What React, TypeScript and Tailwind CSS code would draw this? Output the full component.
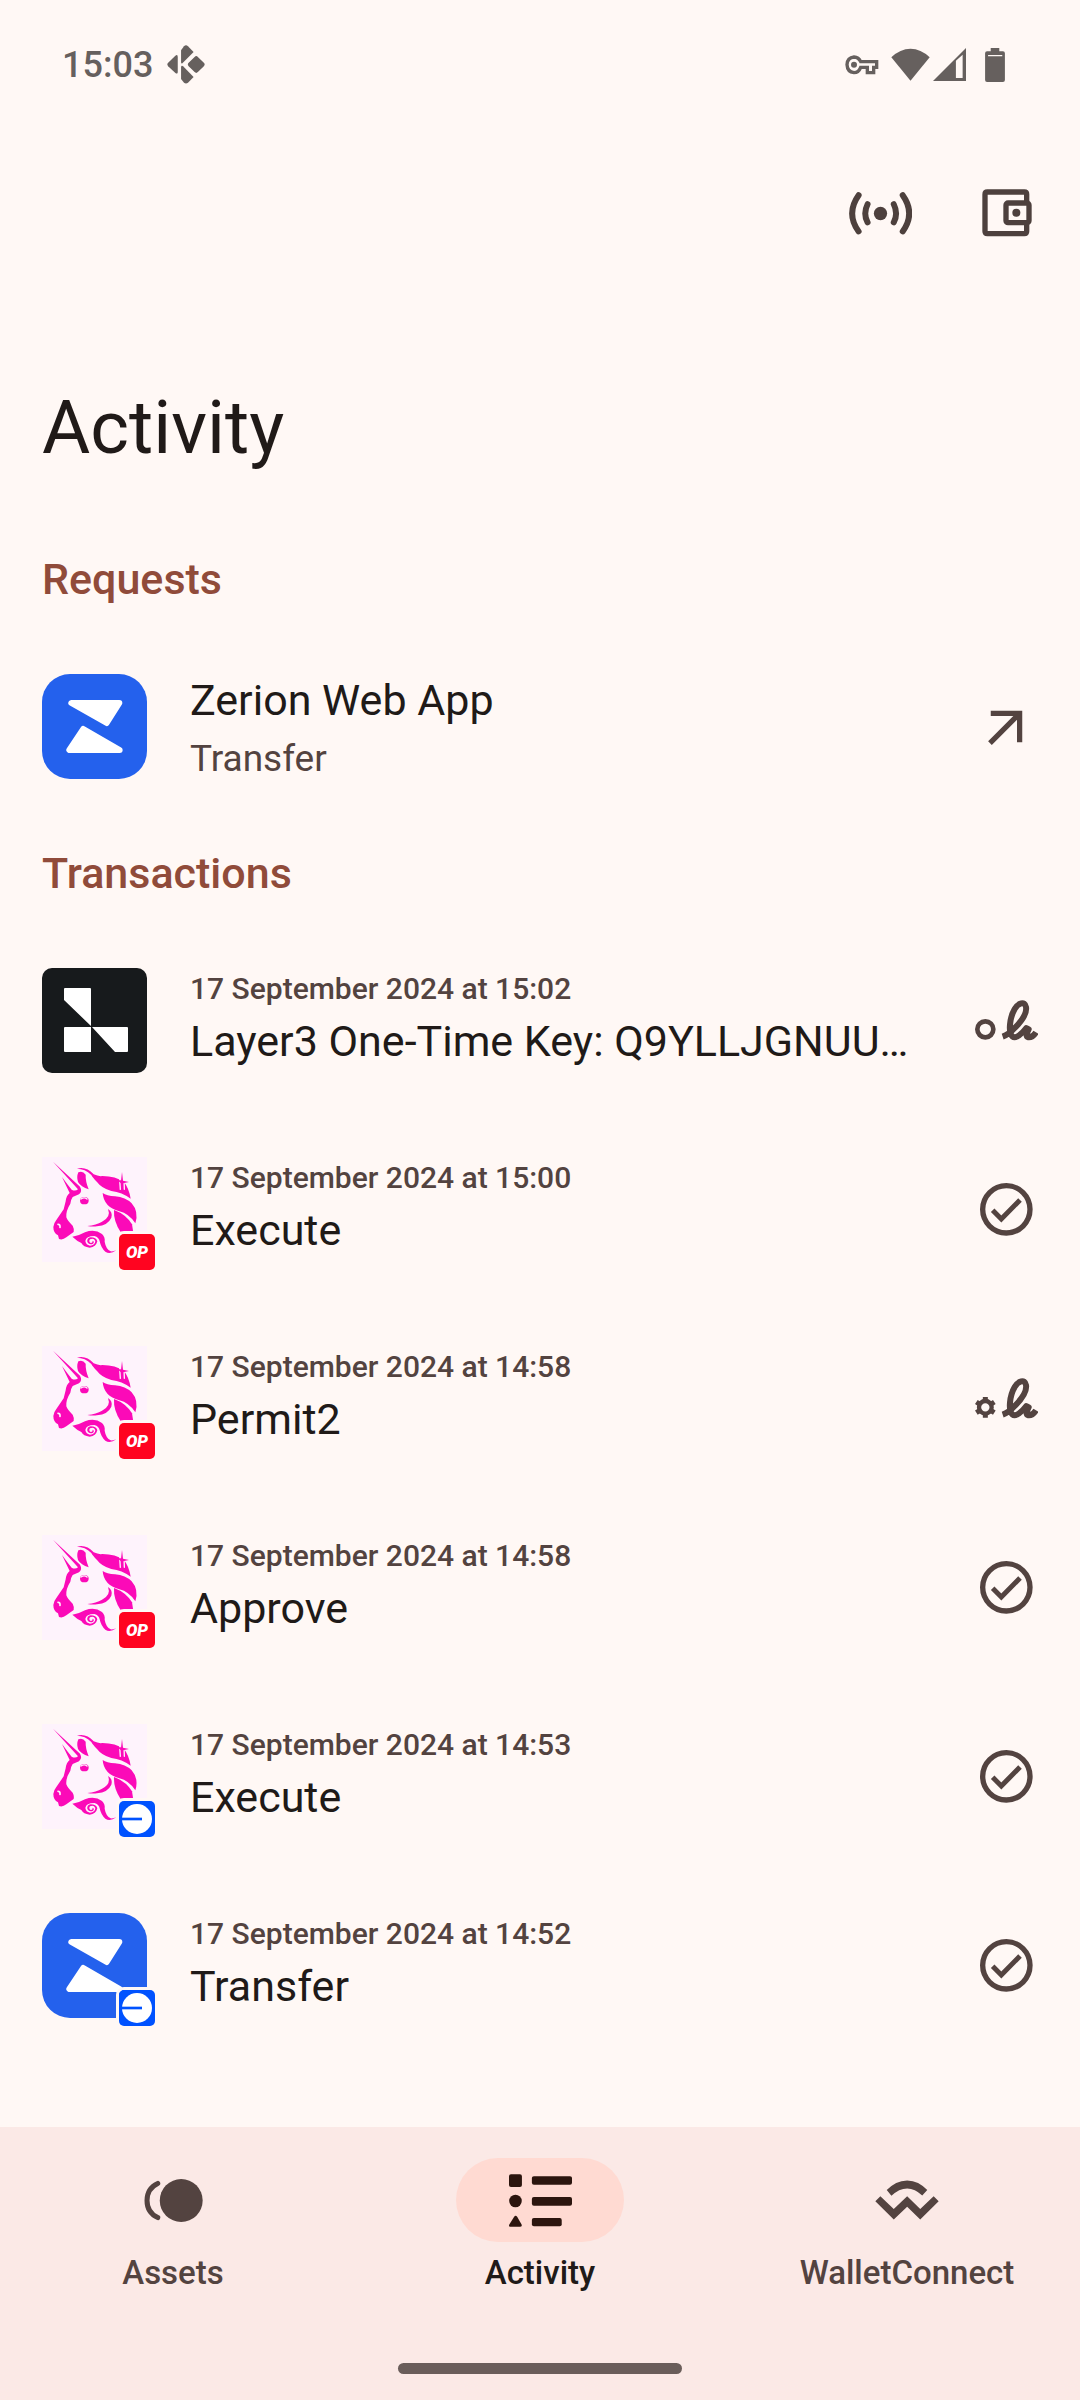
import React from "react";

type IconProps = { className?: string };

function KodiIcon() {
  return (
    <svg viewBox="378 46 114 118" className="h-[39px] w-[38px]" fill="currentColor" aria-hidden="true">
      <path d="M429 50Q435 44 441 50L458 67L424 101Q420 104 420 97V62Z" />
      <path d="M461 82Q466 77 471 82L489 100Q494 105 489 110L471 128Q466 133 461 128L443 110Q438 105 443 100Z" />
      <path d="M402 79Q410 73 410 82V128Q410 136 402 130L381 110Q376 105 381 100Z" />
      <path d="M420 113Q421 106 427 111L458 143L441 160Q435 165 429 160L420 149Z" />
    </svg>
  );
}

function KeyIcon() {
  return (
    <svg viewBox="74 74 102 60" className="h-[20px] w-[34px]" fill="none" stroke="currentColor" strokeWidth="10" aria-hidden="true">
      <path d="M121 94H169V111H160V127H141V111H121Q115 127 101 127Q81 125 80 103Q81 82 101 80Q115 81 121 94Z" />
      <circle cx="101" cy="103" r="9" fill="currentColor" stroke="none" />
    </svg>
  );
}

function WifiIcon() {
  return (
    <svg viewBox="212 50 118 98" className="h-[33px] w-[39px]" fill="currentColor" aria-hidden="true">
      <path d="M271 148L213 77Q240 51 271 51Q302 51 329 77Z" />
    </svg>
  );
}

function SignalIcon() {
  return (
    <svg viewBox="340 52 98 98" className="h-[33px] w-[33px]" fill="currentColor" aria-hidden="true">
      <path fillRule="evenodd" d="M438 52V150H340ZM408 90V141H428V72Z" />
    </svg>
  );
}

function BatteryIcon() {
  return (
    <svg viewBox="495 50 60 103" className="h-[34px] w-[20px]" fill="currentColor" aria-hidden="true">
      <path fillRule="evenodd" d="M512 50H538V60H549Q555 60 555 66V147Q555 153 549 153H501Q495 153 495 147V66Q495 60 501 60H512ZM504 71V75H547V71Z" />
    </svg>
  );
}

function BroadcastIcon() {
  return (
    <svg viewBox="86 484 190 128" className="h-[43px] w-[63px]" fill="none" stroke="currentColor" strokeWidth="18" strokeLinecap="round" aria-hidden="true">
      <circle cx="181" cy="548" r="20" fill="currentColor" stroke="none" />
      <path d="M115 493Q76 548 115 602M248 493Q287 548 248 602M142 520Q128 548 142 575M221 520Q235 548 221 575" />
    </svg>
  );
}

function WalletIcon() {
  return (
    <svg viewBox="488 476 150 144" className="h-[48px] w-[50px]" fill="none" stroke="currentColor" strokeWidth="16" aria-hidden="true">
      <path d="M622 512V492Q622 485 615 485H504Q497 485 497 492V603Q497 610 504 610H615Q622 610 622 603V582" />
      <rect x="560" y="518" width="69" height="59" rx="6" />
      <circle cx="591" cy="547" r="12" fill="currentColor" stroke="none" />
    </svg>
  );
}

function ArrowIcon() {
  return (
    <svg viewBox="0 0 24 24" className="h-[63px] w-[63px]" fill="currentColor" aria-hidden="true">
      <path d="M6 6v2h8.590L5 17.590 6.410 19 16 9.410V18h2V6z" />
    </svg>
  );
}

function CheckIcon() {
  return (
    <svg viewBox="105 624 189 189" className="h-[63px] w-[63px]" fill="none" stroke="currentColor" strokeWidth="16" aria-label="Confirmed" role="img">
      <circle cx="199" cy="718" r="71" />
      <path d="M158 721L184 747L240 690" strokeWidth="15" />
    </svg>
  );
}

function Signature() {
  return (
    <path
      d="M188 197Q206 191 226 169C250 145 261 125 258 108C254 89 235 96 224 114C209 140 204 184 217 196C228 205 246 188 259 171L266 175C259 188 257 197 265 199C274 200 283 192 288 184"
      fill="none"
      stroke="currentColor"
      strokeWidth="18"
      strokeLinejoin="round"
    />
  );
}

function SignMessageIcon() {
  return (
    <svg viewBox="105 54 189 189" className="h-[63px] w-[63px]" fill="none" stroke="currentColor" aria-label="Signed message" role="img">
      <circle cx="136" cy="175" r="24" strokeWidth="14" />
      <Signature />
    </svg>
  );
}

function SignTypedIcon() {
  return (
    <svg viewBox="105 54 189 189" className="h-[63px] w-[63px]" fill="none" stroke="currentColor" aria-label="Signed data" role="img">
      <circle cx="136" cy="175" r="19" strokeWidth="13" />
      <path d="M136 144V156M136 194V206M109 159L120 166M152 184L163 191M163 159L152 166M120 184L109 191" strokeWidth="15" />
      <Signature />
    </svg>
  );
}

function ZerionLogo() {
  return (
    <svg viewBox="66 912 315 315" className="block h-[105px] w-[105px]" aria-label="Zerion" role="img">
      <rect x="66" y="912" width="315" height="315" rx="84" fill="#2461ed" />
      <g fill="#fff" stroke="#fff" strokeWidth="18" strokeLinejoin="round">
        <path d="M154 999H298L260 1059Z" />
        <path d="M190 1077L148 1140H299Z" />
      </g>
    </svg>
  );
}

function LayerLogo() {
  return (
    <svg viewBox="0 0 105 105" className="block h-[105px] w-[105px]" aria-label="Layer3" role="img">
      <rect width="105" height="105" rx="10" fill="#171a1c" />
      <path fill="#fff" d="M23 20H48Q49 20 49 21V58L22 32V21Q22 20 23 20ZM23 59H49V84H23Q22 84 22 83V60Q22 59 23 59ZM50 59H85Q86 59 86 60V83Q86 84 85 84H73Z" />
    </svg>
  );
}

function UnicornLogo() {
  return (
    <svg viewBox="36 51 315 315" className="block h-[105px] w-[105px]" aria-label="Uniswap" role="img">
      <rect x="36" y="51" width="315" height="315" fill="#fef3fc" />
      <g fill="#fb0ab8">
        <path d="M69 65L150 140Q158 154 147 163L128 171Q122 180 121 191Q107 213 109 232Q112 242 128 257Q133 266 131 276L109 292Q98 301 87 297L84 286Q70 279 70 261Q72 248 79 240L101 208L107 184Q109 166 119 159L96 111Q111 132 125 149Q136 155 144 148Z" />
        <path d="M145 97Q158 91 167 104Q166 123 176 148Q153 141 144 126Q139 111 145 97Z" />
        <path d="M141 86Q168 78 191 103Q206 110 217 108Q257 108 282 126Q297 145 302 176Q276 157 244 153Q215 145 201 126Q188 113 184 105Q165 86 141 86Z" />
        <path d="M218 159Q230 168 255 169Q287 172 305 190Q327 215 316 250Q297 221 268 214Q221 201 218 159Z" />
        <path d="M252 210Q288 223 306 253L310 278H273Q250 245 252 210Z" />
        <path d="M234 207Q249 216 244 233Q234 256 201 259Q188 261 172 258Q199 255 216 245Q244 231 234 207Z" />
        <ellipse cx="163" cy="182" rx="13" ry="11" />
        <path d="M127 290Q148 287 165 277Q194 266 216 282Q226 292 224 305Q228 328 242 334Q250 335 259 331Q240 344 226 335Q213 324 209 304Q207 292 193 288Q168 288 166 303Q168 315 180 317Q195 316 196 303Q191 292 180 298Q175 305 182 309Q190 307 187 302Q195 304 189 311Q178 316 172 306Q170 294 182 292Q199 292 202 304Q198 321 179 323Q160 321 154 309Q142 304 127 290Z" />
      </g>
      <g fill="none" stroke="#fef3fc" strokeLinecap="round">
        <path d="M153 177Q163 170 171 177" strokeWidth="4" />
        <path d="M84 253Q91 253 90 262" strokeWidth="5" />
        <path d="M269 119L271 148M282 117L283 148" strokeWidth="4" />
      </g>
      <path d="M276 96L279 122L297 126L279 130L277 158L273 130L258 117L273 122Z" fill="#fb0ab8" />
    </svg>
  );
}

function NetworkBadge({ network }: { network: "op" | "base" }) {
  return (
    <span className="absolute -right-[11px] -bottom-[11px] rounded-[8px] border-3 border-[#fff8f5]">
      {network === "op" ? (
        <span className="flex size-[36px] items-center justify-center rounded-[5px] bg-[#ff0420] text-[17px] leading-none font-black text-white italic">OP</span>
      ) : (
        <svg viewBox="0 0 108 108" className="block size-[36px]" aria-label="Base" role="img">
          <rect width="108" height="108" rx="15" fill="#0052ff" />
          <circle cx="54" cy="54" r="45" fill="#fff" />
          <path d="M8 50H69V58H8Z" fill="#0052ff" />
        </svg>
      )}
    </span>
  );
}

function AssetsIcon({ className }: IconProps) {
  return (
    <svg viewBox="130 177 176 128" className={className} aria-hidden="true">
      <circle cx="241" cy="241" r="64" fill="currentColor" />
      <path d="M171 190Q139 205 139 241Q139 277 171 292" fill="none" stroke="currentColor" strokeWidth="15" strokeLinecap="round" />
    </svg>
  );
}

function ActivityIcon({ className }: IconProps) {
  return (
    <svg viewBox="264 162 190 159" className={className} fill="currentColor" aria-hidden="true">
      <rect x="264" y="162" width="39" height="39" rx="6" />
      <circle cx="283.500" cy="243" r="19" />
      <path d="M279 291Q284 284 289 291L302 314Q304 321 297 321H270Q262 321 265 314Z" />
      <rect x="333" y="168" width="121" height="26" rx="6" />
      <rect x="333" y="231" width="121" height="26" rx="6" />
      <rect x="333" y="294" width="90" height="25" rx="6" />
    </svg>
  );
}

function WalletConnectIcon({ className }: IconProps) {
  return (
    <svg viewBox="344 184 191 119" className={className} fill="currentColor" aria-hidden="true">
      <path d="M379 214Q405 186 440 185Q475 186 500 214L485 230Q463 209 440 209Q416 209 393 231Z" />
      <path d="M345 247L360 232L400 270L440 232L479 270L519 232L534 247L479 302L440 264L400 302Z" />
    </svg>
  );
}

type Transaction = {
  date: string;
  title: string;
  logo: React.ReactNode;
  network?: "op" | "base";
  status: React.ReactNode;
};

const transactions: Transaction[] = [
  { date: "17 September 2024 at 15:02", title: "Layer3 One-Time Key: Q9YLLJGNUU…", logo: <LayerLogo />, status: <SignMessageIcon /> },
  { date: "17 September 2024 at 15:00", title: "Execute", logo: <UnicornLogo />, network: "op", status: <CheckIcon /> },
  { date: "17 September 2024 at 14:58", title: "Permit2", logo: <UnicornLogo />, network: "op", status: <SignTypedIcon /> },
  { date: "17 September 2024 at 14:58", title: "Approve", logo: <UnicornLogo />, network: "op", status: <CheckIcon /> },
  { date: "17 September 2024 at 14:53", title: "Execute", logo: <UnicornLogo />, network: "base", status: <CheckIcon /> },
  { date: "17 September 2024 at 14:52", title: "Transfer", logo: <ZerionLogo />, network: "base", status: <CheckIcon /> },
];

const tabs = [
  { label: "Assets", icon: <AssetsIcon className="h-[43px] w-[59px]" />, active: false },
  { label: "Activity", icon: <ActivityIcon className="h-[53px] w-[63px]" />, active: true },
  { label: "WalletConnect", icon: <WalletConnectIcon className="h-[40px] w-[64px]" />, active: false },
];

function SectionTitle({ children }: { children: React.ReactNode }) {
  return <h2 className="py-[21px] text-[43px] leading-[63px] font-medium text-[#904b3a]">{children}</h2>;
}

export default function App() {
  return (
    <div className="flex min-h-screen flex-col bg-[#fff8f5] font-[Roboto,sans-serif] text-[#201a18]">
      <div className="flex h-[129px] items-center justify-between pr-[75px] pl-[62px] text-[#66605e]">
        <div className="flex items-center gap-[14px]">
          <span className="text-[36px] leading-[42px] font-medium">15:03</span>
          <KodiIcon />
        </div>
        <div className="flex items-center">
          <KeyIcon />
          <div className="ml-3 flex gap-[3px]">
            <WifiIcon />
            <SignalIcon />
          </div>
          <div className="ml-[19px]">
            <BatteryIcon />
          </div>
        </div>
      </div>

      <header className="px-[42px]">
        <div className="flex h-[168px] items-center justify-end gap-[70px] pr-[6px] text-[#4d403d]">
          <button type="button" aria-label="Broadcast"><BroadcastIcon /></button>
          <button type="button" aria-label="Wallet"><WalletIcon /></button>
        </div>
        <h1 className="pt-[84px] pb-[52px] text-[74px] leading-[94px]">Activity</h1>
      </header>

      <main className="flex-1 px-[42px]">
        <section>
          <SectionTitle>Requests</SectionTitle>
          <button type="button" className="flex h-[189px] w-full items-center text-left">
            <ZerionLogo />
            <span className="ml-[43px] min-w-0 flex-1">
              <span className="block truncate text-[43px] leading-[63px]">Zerion Web App</span>
              <span className="block text-[37px] leading-[53px] text-[#534340]">Transfer</span>
            </span>
            <span className="ml-[42px] text-[#534340]"><ArrowIcon /></span>
          </button>
        </section>

        <section>
          <SectionTitle>Transactions</SectionTitle>
          <ul>
            {transactions.map((item, i) => (
              <li key={i}>
                <button type="button" className="flex h-[189px] w-full items-center text-left">
                  <span className="relative">
                    {item.logo}
                    {item.network && <NetworkBadge network={item.network} />}
                  </span>
                  <span className="ml-[43px] min-w-0 flex-1">
                    <span className="block text-[30px] leading-[42px] font-medium text-[#534340]">{item.date}</span>
                    <span className="block truncate text-[43px] leading-[63px]">{item.title}</span>
                  </span>
                  <span className="ml-[42px] text-[#534340]">{item.status}</span>
                </button>
              </li>
            ))}
          </ul>
        </section>
      </main>

      <div className="bg-[#fbe9e6]">
        <nav className="grid grid-cols-3 gap-[21px] pt-[31px]">
          {tabs.map((tab) => (
            <a
              key={tab.label}
              href="#"
              aria-current={tab.active ? "page" : undefined}
              className={tab.active ? "flex flex-col items-center gap-[10px] text-[#201a18]" : "flex flex-col items-center gap-[10px] text-[#534340]"}
            >
              <span className={tab.active ? "flex h-[84px] w-[168px] items-center justify-center rounded-full bg-[#ffdad2] text-[#2c150e]" : "flex h-[84px] w-[168px] items-center justify-center"}>
                {tab.icon}
              </span>
              <span className="text-[33px] leading-[42px] font-medium">{tab.label}</span>
            </a>
          ))}
        </nav>
        <div className="flex justify-center pt-[69px] pb-[26px]">
          <div className="h-[11px] w-[284px] rounded-full bg-[#6a5d5a]" />
        </div>
      </div>
    </div>
  );
}
